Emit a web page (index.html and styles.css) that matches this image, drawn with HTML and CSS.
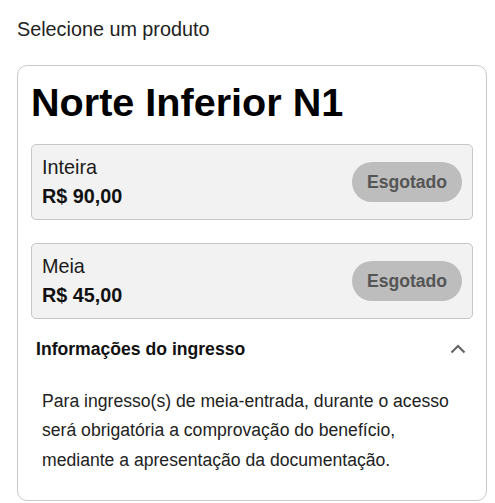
FILE: index.html
```html
<!DOCTYPE html>
<html lang="pt-BR">
<head>
<meta charset="utf-8">
<title>Selecione um produto</title>
<link rel="stylesheet" href="styles.css">
</head>
<body>
<div class="page">
  <h2 class="page-title">Selecione um produto</h2>
  <section class="card">
    <h1 class="card-title">Norte Inferior N1</h1>
    <div class="tickets">
      <div class="ticket">
        <div class="ticket-info">
          <div class="ticket-name">Inteira</div>
          <div class="ticket-price">R$ 90,00</div>
        </div>
        <button class="btn-soldout" disabled>Esgotado</button>
      </div>
      <div class="ticket">
        <div class="ticket-info">
          <div class="ticket-name">Meia</div>
          <div class="ticket-price">R$ 45,00</div>
        </div>
        <button class="btn-soldout" disabled>Esgotado</button>
      </div>
    </div>
    <div class="info">
      <div class="info-header">
        <span class="info-title">Informações do ingresso</span>
        <svg class="chevron" width="16" height="10" viewBox="0 0 16 10" aria-hidden="true">
          <path d="M1.5 8.5 L8 2 L14.5 8.5" fill="none" stroke="#666" stroke-width="2.2"/>
        </svg>
      </div>
      <p class="info-text">Para ingresso(s) de meia-entrada, durante o acesso será obrigatória a comprovação do benefício, mediante a apresentação da documentação.</p>
    </div>
  </section>
</div>
</body>
</html>
```
FILE: styles.css
```css
html, body {
  margin: 0;
  padding: 0;
  background: #ffffff;
}
body {
  font-family: "Liberation Sans", Arial, sans-serif;
  color: #111;
}
.page {
  padding: 18px 8px 0 17px;
}
.page-title {
  margin: 0 0 23px;
  font-size: 19.8px;
  font-weight: normal;
  line-height: 1.2;
  color: #222;
}
.card {
  border: 1px solid #c9c9c9;
  border-radius: 10px;
  padding: 13px 13px 13px;
}
.card-title {
  margin: 0 0 18px;
  font-size: 39.6px;
  font-weight: bold;
  line-height: 1.2;
  color: #000;
}
.tickets {
  display: flex;
  flex-direction: column;
  gap: 23px;
}
.ticket {
  display: flex;
  align-items: center;
  justify-content: space-between;
  background: #f2f2f2;
  border: 1px solid #c6c6c6;
  border-radius: 5px;
  padding: 8px 10px;
}
.ticket-name {
  font-size: 19.8px;
  line-height: 29px;
  color: #1a1a1a;
}
.ticket-price {
  font-size: 19.8px;
  line-height: 29px;
  font-weight: bold;
  color: #111;
}
.btn-soldout {
  font-family: "Liberation Sans", Arial, sans-serif;
  font-size: 17.6px;
  font-weight: bold;
  color: #555;
  background: #bdbdbd;
  border: none;
  border-radius: 20px;
  height: 40px;
  width: 110px;
  padding: 0;
}
.info-header {
  display: flex;
  align-items: center;
  justify-content: space-between;
  padding: 17px 7px 18px 5px;
  line-height: 26.4px;
}
.info-title {
  font-size: 17.6px;
  font-weight: bold;
  color: #111;
}
.chevron {
  display: block;
}
.info-text {
  margin: 0;
  padding: 6px 11px 12px;
  font-size: 17.6px;
  line-height: 29.6px;
  color: #222;
}
```
